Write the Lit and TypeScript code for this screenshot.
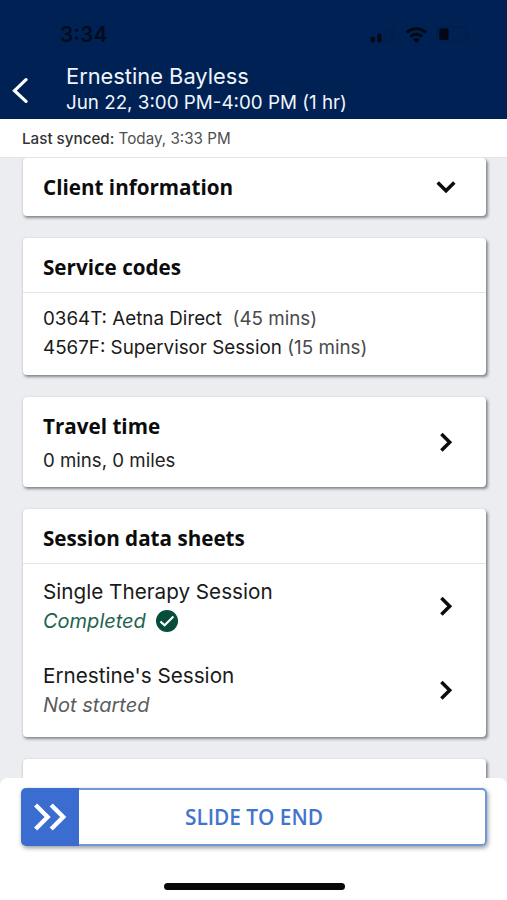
import { LitElement, html, css, svg } from "lit";
import { customElement, property } from "lit/decorators.js";

@customElement("chevron-icon")
export class ChevronIcon extends LitElement {
  @property() direction: "left" | "right" | "down" = "right";

  static styles = css`
    :host { display: block; flex: none; }
    svg { display: block; fill: none; stroke: currentColor; }
    .thick { stroke-width: 3.5; }
    .thin { stroke-width: 3.2; stroke-linecap: round; }
  `;

  render() {
    if (this.direction === "left") {
      return html`<svg width="18" height="28" viewBox="0 0 18 28"><path class="thin" d="M16 3.7 L4.5 14.7 L16 25.4"/></svg>`;
    }
    return this.direction === "down"
      ? html`<svg width="20" height="20" viewBox="0 0 20 20"><path class="thick" d="M1.7 5.4 L10 13.7 L18.3 5.4"/></svg>`
      : html`<svg width="20" height="20" viewBox="0 0 20 20"><path class="thick" d="M5.4 1.9 L13.7 10.2 L5.4 18.5"/></svg>`;
  }
}

@customElement("status-icons")
export class StatusIcons extends LitElement {
  static styles = css`
    :host { display: block; }
    svg { display: block; }
  `;

  render() {
    const arcs = svg`
      <g fill="none" stroke="#030916" stroke-width="3">
        <path d="M37.8 8.6 A14 14 0 0 1 57 8.6"/>
        <path d="M41.5 12.6 A8.8 8.8 0 0 1 53.3 12.6"/>
      </g>
      <path d="M47.4 19 L44 15.6 A5 5 0 0 1 50.8 15.6 Z" fill="#030916"/>`;
    return html`<svg width="104" height="22" viewBox="0 0 104 22">
      <rect x="1.5" y="12.8" width="4.4" height="5.4" rx="1.2" fill="#030916"/>
      <rect x="8.3" y="9.8" width="4.2" height="8.4" rx="1.2" fill="#030916"/>
      <rect x="15.4" y="7" width="3.6" height="11.2" rx="1.2" fill="#011e4e"/>
      <rect x="21.6" y="4" width="3.6" height="14.2" rx="1.2" fill="#011e4e"/>
      ${arcs}
      <rect x="68" y="3" width="29" height="15" rx="4" fill="none" stroke="#011d4d" stroke-width="1.2"/>
      <rect x="70.3" y="4.6" width="9.3" height="11.4" rx="2" fill="#030814"/>
      <rect x="98.8" y="8" width="1.6" height="5" rx="0.8" fill="#011d4d"/>
    </svg>`;
  }
}

@customElement("info-card")
export class InfoCard extends LitElement {
  static styles = css`
    :host {
      display: flex;
      flex-direction: column;
      box-sizing: border-box;
      flex: none;
      background: #fff;
      border-radius: 4px;
      box-shadow: 1.5px 2px 3px rgba(50, 56, 62, 0.55), 0 0 2px rgba(120, 125, 130, 0.2);
    }
  `;

  render() {
    return html`<slot></slot>`;
  }
}

@customElement("app-root")
export class AppRoot extends LitElement {
  static styles = css`
    :host {
      display: flex;
      flex-direction: column;
      height: 900px;
      overflow: hidden;
      background: #ebedf1;
      color: #1a1a1a;
      font-family: Inter, "Liberation Sans", sans-serif;
    }
    .header {
      flex: none;
      height: 119px;
      background: #002154;
      color: #f1f5fa;
    }
    .status {
      display: flex;
      justify-content: space-between;
      height: 62px;
      padding: 23px 34px 0 60px;
      box-sizing: border-box;
    }
    .clock {
      font-size: 21px;
      line-height: 24px;
      font-weight: 600;
      color: #030c1e;
    }
    .status-right { display: block; margin-top: 1px; }
    .nav { display: flex; height: 57px; }
    .back { margin: 14px 0 0 10px; color: #fff; }
    .who { margin-left: 38px; padding-top: 1px; }
    .name { font-size: 21.85px; line-height: 27px; }
    .when { font-size: 18.8px; line-height: 25px; }
    .sync {
      flex: none;
      height: 39px;
      box-sizing: border-box;
      padding-left: 22px;
      background: #fff;
      font-size: 15.2px;
      line-height: 39px;
      color: #505050;
      border-bottom: 1px solid #e3e5e8;
    }
    .sync b { font-weight: 450; color: #333; }
    .scroll {
      flex: 1;
      min-height: 0;
      overflow: hidden;
      display: flex;
      flex-direction: column;
      gap: 22px;
      padding: 0 21px 0 23px;
    }
    .client { height: 58px; }
    .codes { height: 137px; }
    .travel { height: 90px; }
    .sheets { height: 228px; }
    .next { height: 60px; }
    h2 {
      margin: 0;
      font: 700 20.65px/28px "Open Sans", "Noto Sans", sans-serif;
      color: #0c0c0c;
    }
    .row {
      display: flex;
      justify-content: space-between;
      align-items: center;
      padding: 0 30px 0 20px;
      color: #0c0c0c;
    }
    .client .row { height: 58px; }
    .travel .row { height: 90px; }
    .travel-text { padding-top: 2px; }
    .title {
      flex: none;
      height: 55px;
      box-sizing: border-box;
      padding: 15px 20px 0;
      border-bottom: 1px solid #e3e5e7;
    }
    .list { padding: 12px 20px 0; font-size: 18.8px; line-height: 28.5px; }
    .muted { color: #4a4a4a; }
    .miles { font-size: 18.65px; line-height: 28px; margin-top: 6px; color: #222; }
    .session { height: 84px; flex: none; color: #1a1a1a; }
    .session-name { font-size: 20.7px; line-height: 30px; }
    .state { display: flex; align-items: center; gap: 10px; font-size: 20px; line-height: 28px; font-style: italic; color: #5c5c5c; }
    .session chevron-icon { color: #0c0c0c; }
    .state.done { color: #23634e; }
    .state svg { display: block; }
    .footer {
      flex: none;
      height: 122px;
      box-sizing: border-box;
      padding: 10px 20px 0 21px;
      background: #fff;
      border-radius: 8px 8px 0 0;
    }
    .slider {
      display: flex;
      height: 58px;
      border-radius: 5px;
      box-shadow: 1px 2px 4px rgba(50, 55, 65, 0.5);
    }
    .handle {
      flex: none;
      display: flex;
      width: 58px;
      align-items: center;
      justify-content: center;
      background: #3a6dcf;
      border-radius: 5px 0 0 5px;
    }
    .slide-label {
      flex: 1;
      box-sizing: border-box;
      padding-left: 106px;
      border: 2px solid #7296d6;
      border-left: 0;
      border-radius: 0 5px 5px 0;
      font: 600 20.8px/54px "Open Sans", "Noto Sans", sans-serif;
      color: #4174cd;
    }
    .home {
      width: 181px;
      height: 7px;
      margin: 37px auto 0 143px;
      border-radius: 4px;
      background: #080808;
    }
  `;

  private session(name: string, done: boolean) {
    return html`<div class="row session">
      <div>
        <div class="session-name">${name}</div>
        ${done
          ? html`<div class="state done"><span>Completed</span><svg width="22" height="22" viewBox="0 0 22 22"><circle cx="11" cy="11" r="11" fill="#064d3b"/><path d="M4.4 11.5 L8.6 15.2 L17.4 6.6" fill="none" stroke="#fff" stroke-width="2.1"/></svg></div>`
          : html`<div class="state"><span>Not started</span></div>`}
      </div>
      <chevron-icon></chevron-icon>
    </div>`;
  }

  render() {
    return html`
      <div class="header">
        <div class="status">
          <span class="clock">3:34</span>
          <status-icons class="status-right"></status-icons>
        </div>
        <div class="nav">
          <chevron-icon class="back" direction="left"></chevron-icon>
          <div class="who">
            <div class="name">Ernestine Bayless</div>
            <div class="when">Jun 22, 3:00 PM-4:00 PM (1 hr)</div>
          </div>
        </div>
      </div>
      <div class="sync"><b>Last synced:</b> Today, 3:33 PM</div>
      <div class="scroll">
        <info-card class="client"><div class="row"><h2>Client information</h2><chevron-icon direction="down"></chevron-icon></div></info-card>
        <info-card class="codes">
          <div class="title"><h2>Service codes</h2></div>
          <div class="list">
            <div>0364T: Aetna Direct&nbsp; <span class="muted">(45 mins)</span></div>
            <div>4567F: Supervisor Session <span class="muted">(15 mins)</span></div>
          </div>
        </info-card>
        <info-card class="travel">
          <div class="row">
            <div class="travel-text"><h2>Travel time</h2><div class="miles">0 mins, 0 miles</div></div>
            <chevron-icon></chevron-icon>
          </div>
        </info-card>
        <info-card class="sheets">
          <div class="title"><h2>Session data sheets</h2></div>
          ${this.session("Single Therapy Session", true)}
          ${this.session("Ernestine's Session", false)}
        </info-card>
        <info-card class="next"></info-card>
      </div>
      <div class="footer">
        <div class="slider">
          <div class="handle"><svg width="34" height="30" viewBox="0 0 34 30"><path d="M2.6 3 L14.6 15 L2.6 27 M18.2 3 L30.2 15 L18.2 27" fill="none" stroke="#fff" stroke-width="4.4"/></svg></div>
          <span class="slide-label">SLIDE TO END</span>
        </div>
        <div class="home"></div>
      </div>
    `;
  }
}
